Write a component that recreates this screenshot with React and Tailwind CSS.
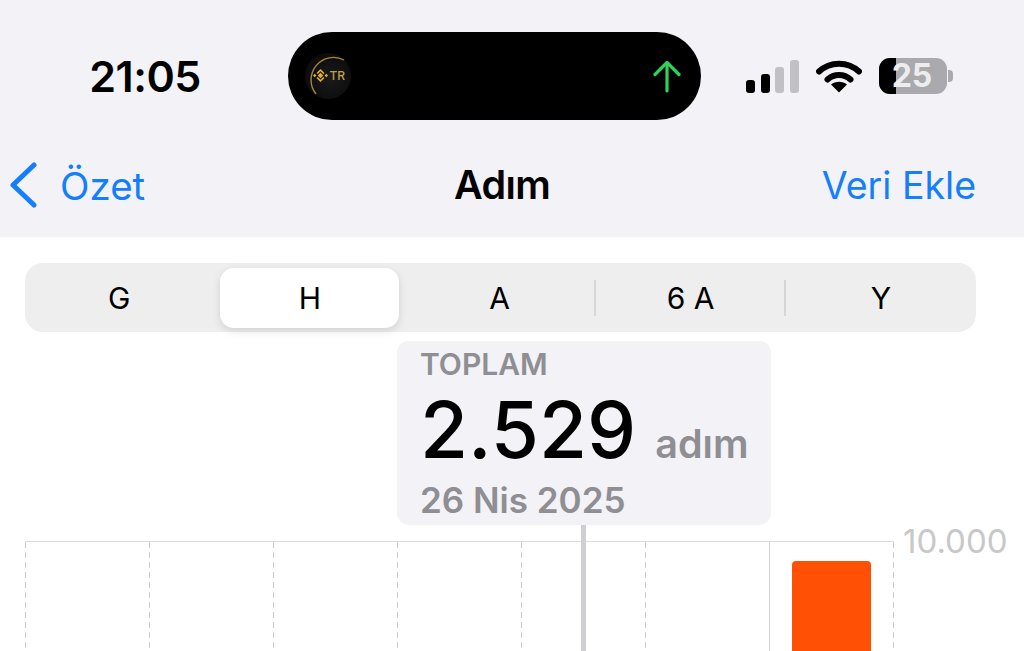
function Signal() {
  return (
    <div className="flex items-end gap-[5.5px] h-[33px]">
      <div className="w-[9px] h-[13px] rounded-[3px] bg-black" />
      <div className="w-[9px] h-[19px] rounded-[3px] bg-black" />
      <div className="w-[9px] h-[26px] rounded-[3px] bg-[#c0c0c5]" />
      <div className="w-[9px] h-[33px] rounded-[3px] bg-[#c0c0c5]" />
    </div>
  );
}

function Wifi() {
  return (
    <svg width="46" height="34" viewBox="0 0 46 34" className="block">
      <path d="M3 12.5 C14 2 32 2 43 12.5" fill="none" stroke="#000" strokeWidth="6" strokeLinecap="round" />
      <path d="M11.5 20.5 C18 14.5 28 14.5 34.5 20.5" fill="none" stroke="#000" strokeWidth="6" strokeLinecap="round" />
      <path d="M23 33.5 L15 25.6 C19.5 21.8 26.5 21.8 31 25.6 Z" fill="#000" />
    </svg>
  );
}

function Battery() {
  return (
    <div className="flex items-center gap-[1px]">
      <div className="relative w-[68px] h-[36px] rounded-[11px] bg-[#aaaaae] flex items-center justify-center">
        <div className="absolute left-0 top-0 bottom-0 w-[17px] rounded-l-[11px] bg-black" />
        <span className="relative ml-[-1px] text-[32px] font-bold leading-none text-[#ededf0]">25</span>
      </div>
      <div className="w-[5px] h-[12px] rounded-r-[4px] bg-[#aaaaae]" />
    </div>
  );
}

function Coin() {
  return (
    <svg width="48" height="48" viewBox="0 0 48 48" className="block">
      <defs>
        <radialGradient id="c" cx="55%" cy="55%" r="55%">
          <stop offset="0%" stopColor="#1a1a1d" />
          <stop offset="100%" stopColor="#0c0c0d" />
        </radialGradient>
      </defs>
      <circle cx="24" cy="24" r="23" fill="url(#c)" />
      <path d="M12 42 A22.5 22.5 0 0 1 40 8" fill="none" stroke="#a5873a" strokeWidth="1.4" />
      <g fill="#e6ae30" transform="translate(16.5 23.5)">
        <rect x="-2" y="-2" width="4" height="4" transform="rotate(45)" />
        <rect x="-7" y="-1.2" width="2.4" height="2.4" transform="rotate(45 -5.8 0)" />
        <rect x="4.6" y="-1.2" width="2.4" height="2.4" transform="rotate(45 5.8 0)" />
        <path d="M-4 -2.6 L0 -6.6 L4 -2.6 L2.8 -1.4 L0 -4.2 L-2.8 -1.4 Z" />
        <path d="M-4 2.6 L0 6.6 L4 2.6 L2.8 1.4 L0 4.2 L-2.8 1.4 Z" />
      </g>
      <text x="25.5" y="28" fontSize="12" fontWeight="500" fill="#c2a04a" fontFamily="Inter, sans-serif">TR</text>
    </svg>
  );
}

function Island() {
  return (
    <div className="w-[413px] h-[88px] rounded-[44px] bg-black flex items-center justify-between pl-[16px] pr-[20px]">
      <Coin />
      <svg width="28" height="33" viewBox="0 0 28 33" fill="none" stroke="#30d158" strokeWidth="3.2" strokeLinecap="round" strokeLinejoin="round">
        <path d="M14 31 V3" />
        <path d="M2 14.5 L14 2.5 L26 14.5" />
      </svg>
    </div>
  );
}

function Segment({ label, active, divider }) {
  const plain = divider ? "flex-1 flex items-center justify-center" : "flex-1 pr-[2px] flex items-center justify-center";
  return (
    <div className="flex items-center min-w-0">
      {divider ? <div className="w-[2px] h-[36px] ml-[-2px] bg-[#d6d6d6] shrink-0" /> : null}
      <div className={active ? "flex-1 ml-[5px] mr-[6px] h-[60px] rounded-[14px] bg-white shadow-[0_3px_8px_rgba(0,0,0,0.12)] flex items-center justify-center" : plain}>
        <span className="text-[30px] text-black leading-none">{label}</span>
      </div>
    </div>
  );
}

const dashed = "w-px self-stretch shrink-0 bg-[repeating-linear-gradient(to_bottom,#cfcfcf_0_6px,transparent_6px_10px)]";

function Column({ solid, children }) {
  return (
    <div className="flex w-[124px] h-full">
      <div className={solid ? "w-px self-stretch shrink-0 bg-[#d2d2d2]" : dashed} />
      <div className="flex-1">{children}</div>
    </div>
  );
}

export default function App() {
  return (
    <div className="relative w-[1024px] h-[651px] overflow-hidden bg-white font-['Inter',sans-serif]">
      <header className="h-[237px] bg-[#f2f2f7] pt-[32px]">
        <div className="flex items-center h-[88px]">
          <div className="w-[288px] flex justify-center pl-[2px]">
            <span className="text-[43px] font-semibold leading-none text-black tracking-[-0.5px]">21:05</span>
          </div>
          <Island />
          <div className="flex items-center pl-[45px] gap-[17px]">
            <Signal />
            <Wifi />
            <Battery />
          </div>
        </div>
        <nav className="flex items-center h-[80px] mt-[25px]">
          <div className="w-[454px] flex items-center pl-[10px]">
            <svg width="27" height="46" viewBox="0 0 27 46" fill="none" stroke="#147efb" strokeWidth="5" strokeLinecap="round" strokeLinejoin="round">
              <path d="M24 3 L3 23 L24 43" />
            </svg>
            <span className="ml-[23px] mt-[2px] text-[38.5px] leading-none text-[#147efb]">Özet</span>
          </div>
          <span className="mt-[2px] text-[39.5px] font-semibold leading-none text-black tracking-[-0.6px]">Adım</span>
          <span className="ml-auto mr-[48px] mt-[2px] text-[37.5px] leading-none text-[#147efb]">Veri Ekle</span>
        </nav>
      </header>

      <div className="grid grid-cols-5 ml-[25px] mt-[26px] w-[951px] h-[69px] rounded-[18px] bg-[#eeeeef]">
        <Segment label="G" />
        <Segment label="H" active />
        <Segment label="A" />
        <Segment label="6 A" divider />
        <Segment label="Y" divider />
      </div>

      <div className="flex items-start ml-[25px] mt-[209px] h-[110px]">
        <div className="flex h-full border-t border-[#dcdcdc] w-[869px]">
          <Column />
          <Column />
          <Column />
          <Column />
          <Column />
          <Column />
          <Column solid>
            <div className="ml-[22px] mt-[19px] w-[79px] h-[100px] rounded-t-[4px] bg-[#ff5005]" />
          </Column>
          <div className={dashed} />
        </div>
        <span className="ml-[9px] mt-[-16px] text-[33px] leading-none text-[#c8c8c8]">10.000</span>
      </div>

      <div className="absolute left-[581px] top-[525px] w-[5px] h-[126px] bg-[#cfcfd3]" />

      <div className="absolute left-[397px] top-[341px] w-[374px] h-[184px] rounded-[12px] bg-[#f2f2f7] pl-[23px] pt-[8px]">
        <div className="text-[30px] font-semibold leading-[30px] text-[#8e8e93]">TOPLAM</div>
        <div className="flex items-baseline mt-[7px] h-[88px]">
          <span className="text-[78px] font-medium leading-[88px] text-black">2.529</span>
          <span className="ml-[19px] text-[39.5px] font-semibold leading-none text-[#8e8e93]">adım</span>
        </div>
        <div className="mt-[6px] text-[35px] font-semibold leading-[40px] text-[#8e8e93]">26 Nis 2025</div>
      </div>
    </div>
  );
}
